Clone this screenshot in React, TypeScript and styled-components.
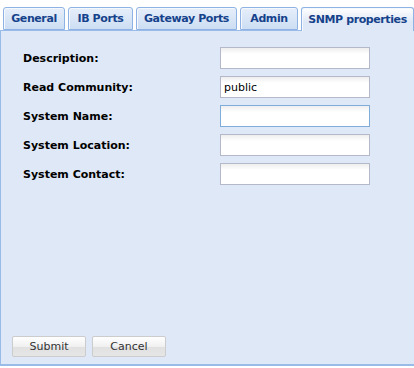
import React from "react";
import styled, { createGlobalStyle } from "styled-components";

const GlobalStyle = createGlobalStyle`
  html, body {
    margin: 0;
    padding: 0;
    background: #ffffff;
    font-family: "DejaVu Sans", Tahoma, sans-serif;
  }
`;

const tabs = [
  { name: "General", width: 62 },
  { name: "IB Ports", width: 65 },
  { name: "Gateway Ports", width: 101 },
  { name: "Admin", width: 58 },
  { name: "SNMP properties", width: 113 },
];

const fields = [
  { label: "Description:", value: "" },
  { label: "Read Community:", value: "public" },
  { label: "System Name:", value: "", focused: true },
  { label: "System Location:", value: "" },
  { label: "System Contact:", value: "" },
];

export default function App() {
  return (
    <>
      <GlobalStyle />
      <Wrap>
        <TabStrip>
          {tabs.map((t, i) => (
            <Tab key={t.name} w={t.width} active={i === tabs.length - 1}>
              {t.name}
            </Tab>
          ))}
        </TabStrip>
        <Panel>
          <Form>
            {fields.map((f) => (
              <Row key={f.label}>
                <Label>{f.label}</Label>
                <Input focused={!!f.focused} defaultValue={f.value} />
              </Row>
            ))}
          </Form>
          <Buttons>
            <Button>Submit</Button>
            <Button>Cancel</Button>
          </Buttons>
        </Panel>
      </Wrap>
    </>
  );
}

const Wrap = styled.div`
  width: 414px;
  height: 368px;
  overflow: hidden;
`;

const TabStrip = styled.div`
  display: flex;
  gap: 3px;
  height: 30px;
  box-sizing: border-box;
  padding: 7px 0 0 3px;
  align-items: flex-end;
`;

const Tab = styled.div<{ active: boolean; w: number }>`
  box-sizing: border-box;
  width: ${(p) => p.w}px;
  height: ${(p) => (p.active ? "24px" : "23px")};
  margin-bottom: ${(p) => (p.active ? "-1px" : "0")};
  display: flex;
  align-items: center;
  justify-content: center;
  border: 1px solid #8db2e3;
  border-bottom: ${(p) => (p.active ? "none" : "1px solid #8db2e3")};
  border-radius: 3px 3px 0 0;
  background: ${(p) =>
    p.active
      ? "linear-gradient(#ffffff, #dfe8f6 60%)"
      : "linear-gradient(#e6eefa, #cddef3)"};
  box-shadow: inset 1px 1px 0 #f5f8fd;
  color: #15428b;
  font-size: 11px;
  font-weight: bold;
  letter-spacing: -0.4px;
  white-space: nowrap;
  position: relative;
  z-index: ${(p) => (p.active ? 1 : 0)};
`;

const Panel = styled.div`
  box-sizing: border-box;
  height: 336px;
  background: #dfe8f6;
  border-top: 1px solid #99bbe8;
  border-left: 1px solid #99bbe8;
  border-bottom: 2px solid #99bbe8;
  display: flex;
  flex-direction: column;
  justify-content: space-between;
  padding: 16px 0 7px 11px;
`;

const Form = styled.div`
  display: flex;
  flex-direction: column;
  gap: 7px;
`;

const Row = styled.div`
  display: flex;
  align-items: center;
  height: 22px;
`;

const Label = styled.label`
  width: 208px;
  padding-left: 11px;
  box-sizing: border-box;
  font-size: 11px;
  font-weight: bold;
  color: #000;
`;

const Input = styled.input<{ focused: boolean }>`
  box-sizing: border-box;
  width: 150px;
  height: 22px;
  margin: 0;
  padding: 0 3px;
  border: 1px solid ${(p) => (p.focused ? "#7eadd9" : "#b5b8c8")};
  background: linear-gradient(#eeeeee, #ffffff 6px);
  font-family: "DejaVu Sans", Tahoma, sans-serif;
  font-size: 11px;
  color: #000;
  outline: none;
`;

const Buttons = styled.div`
  display: flex;
  gap: 6px;
`;

const Button = styled.button`
  box-sizing: border-box;
  width: 74px;
  height: 21px;
  margin: 0;
  padding: 0;
  border: 1px solid #cccccc;
  border-radius: 2px;
  background: linear-gradient(#ffffff, #f0f0f0 50%, #e0e0e0 50%, #e6e6e6);
  font-family: "DejaVu Sans", Tahoma, sans-serif;
  font-size: 11px;
  color: #333;
`;
